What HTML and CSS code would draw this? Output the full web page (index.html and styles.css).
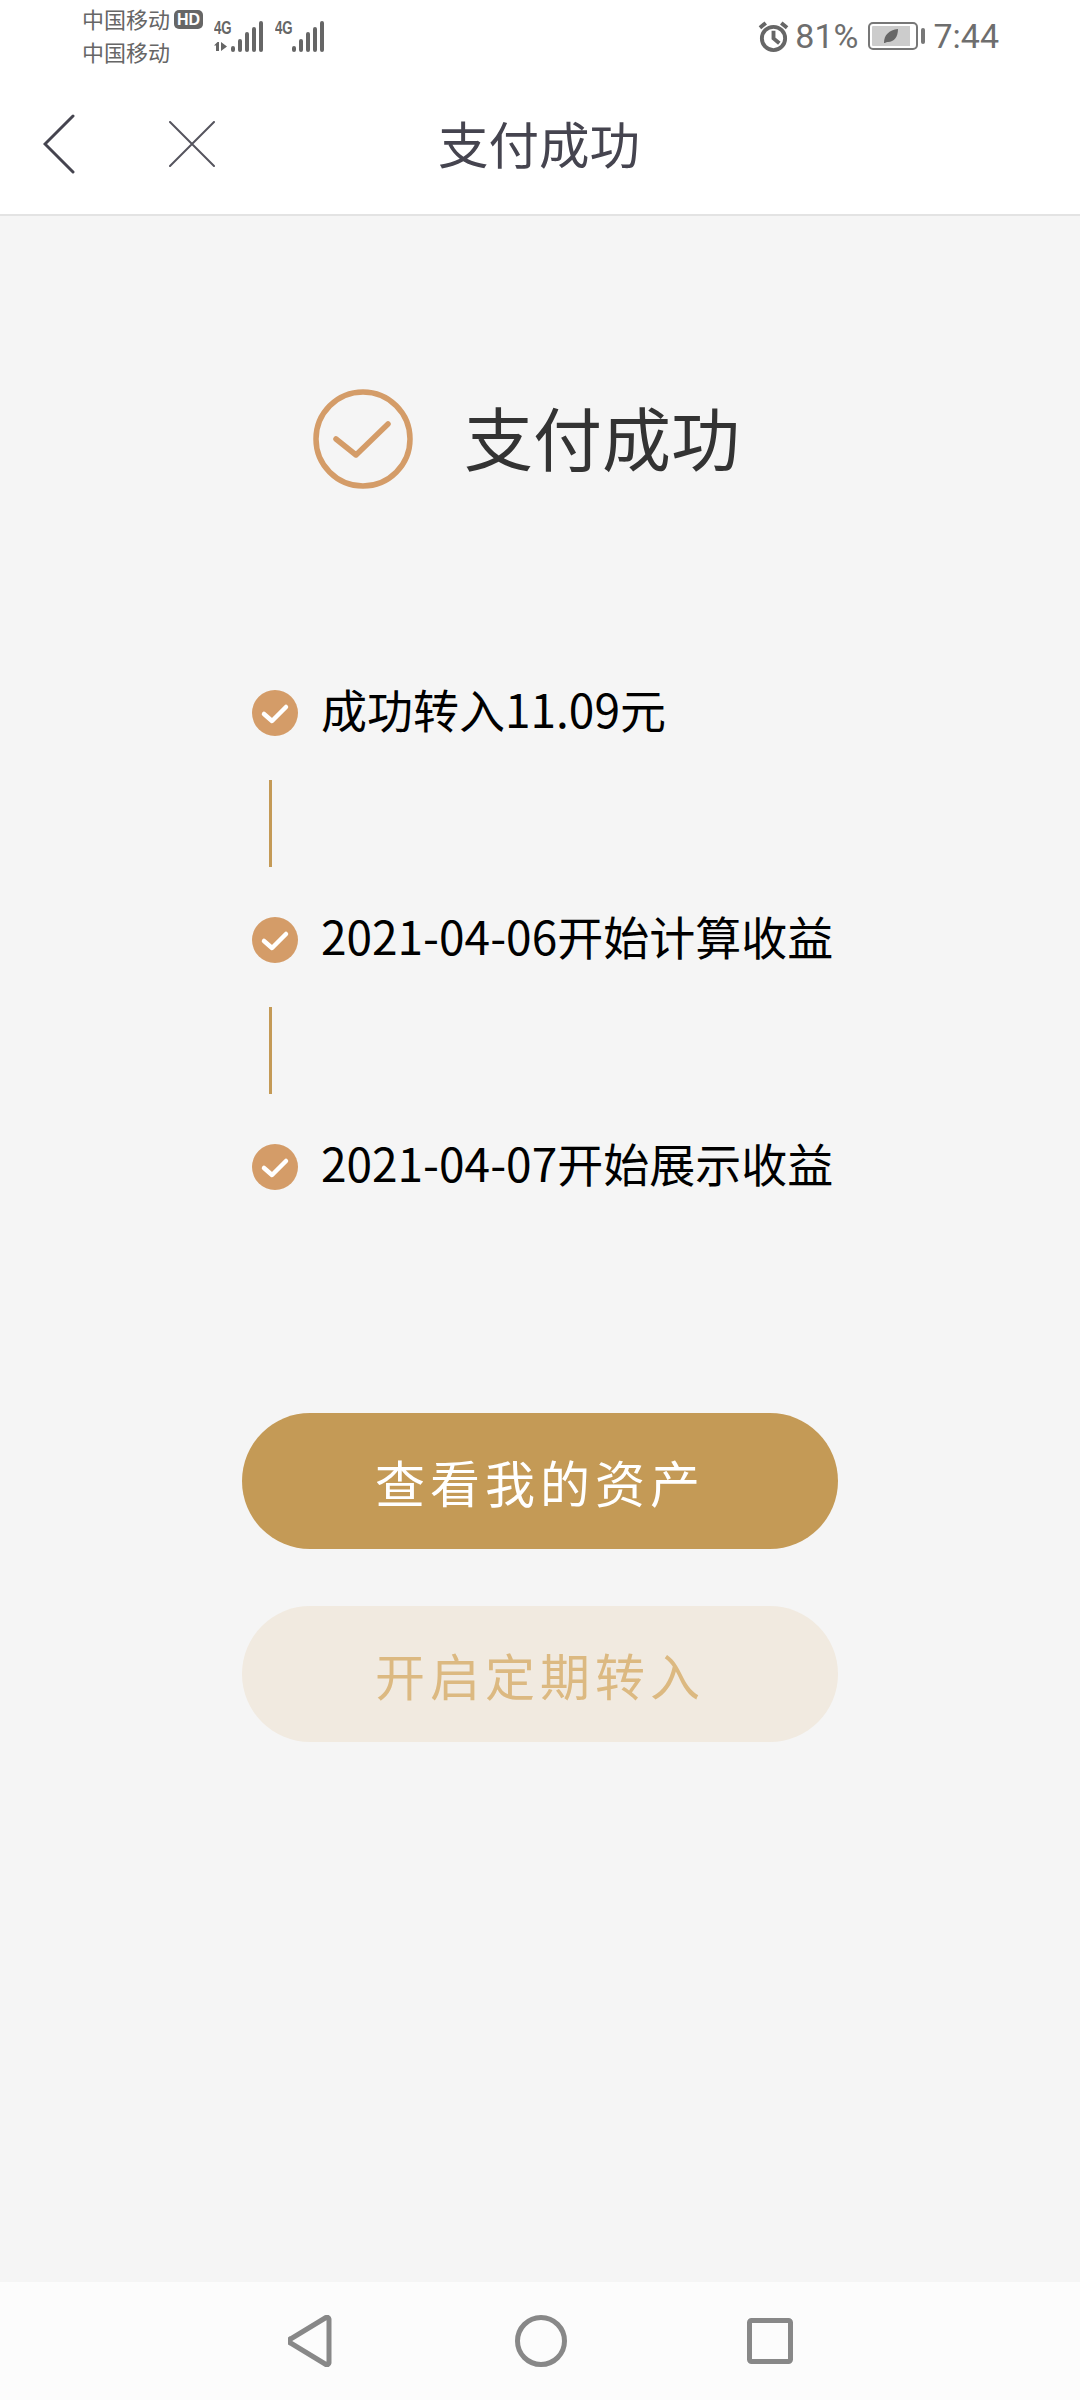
FILE: index.html
```html
<!DOCTYPE html>
<html lang="zh-CN">
<head>
  <meta charset="UTF-8">
  <title>支付成功</title>
  <link rel="stylesheet" href="styles.css">
</head>
<body>
  <div class="app">
    <!-- Status bar -->
    <div class="status-bar">
      <div class="status-left">
        <div class="carriers">
          <div class="carrier">中国移动<span class="hd">HD</span></div>
          <div class="carrier">中国移动</div>
        </div>
        <div class="signal">
          <div class="signal-group">
            <div class="signal-type">
              <span class="signal-label">4G</span>
              <svg class="signal-arrows" width="15" height="9" viewBox="0 0 15 9">
                <path d="M3.500 0L0 3.500h2V9h3V0zM7 0v9l6-4.500z" />
              </svg>
            </div>
            <svg class="signal-bars" width="33" height="31" viewBox="0 0 33 31">
              <path d="M2 27v2M9 20v9M16 13v16M23 8v21M30 2v27" />
            </svg>
          </div>
          <div class="signal-group">
            <div class="signal-type">
              <span class="signal-label">4G</span>
            </div>
            <svg class="signal-bars" width="33" height="31" viewBox="0 0 33 31">
              <path d="M2 27v2M9 20v9M16 13v16M23 8v21M30 2v27" />
            </svg>
          </div>
        </div>
      </div>
      <div class="status-right">
        <svg class="alarm" width="31" height="31" viewBox="0 0 32 32">
          <circle cx="16" cy="18" r="12" />
          <path d="M16 10v8l6 5M2 7l6-5M30 7l-6-5" />
        </svg>
        <span class="battery-level">81%</span>
        <div class="battery">
          <div class="battery-body">
            <svg class="leaf" width="16" height="16" viewBox="0 0 16 16">
              <path d="M1 15C1 7 6 2 15 1c0 8-4 13-10 13-1 0-2 0-3 1z" />
            </svg>
          </div>
          <div class="battery-nub"></div>
        </div>
        <span class="clock">7:44</span>
      </div>
    </div>

    <!-- Header -->
    <div class="header">
      <div class="header-icons">
        <svg class="icon-back" width="32" height="60" viewBox="0 0 32 60">
          <path d="M30 2L2 30l28 28" />
        </svg>
        <svg class="icon-close" width="46" height="46" viewBox="0 0 46 46">
          <path d="M1 1l44 44M45 1L1 45" />
        </svg>
      </div>
      <h1 class="header-title">支付成功</h1>
    </div>

    <!-- Result -->
    <div class="content">
      <div class="result">
        <svg class="result-icon" width="100" height="100" viewBox="0 0 100 100">
          <circle cx="50" cy="50" r="47" />
          <path d="M23 50l20 16 32-31" />
        </svg>
        <span class="result-text">支付成功</span>
      </div>

      <ul class="steps">
        <li class="step">
          <svg class="step-icon" width="46" height="46" viewBox="0 0 46 46">
            <circle cx="23" cy="23" r="23" />
            <path d="M12 24l8 7 14-14" />
          </svg>
          <span class="step-text">成功转入11.09元</span>
        </li>
        <li class="step-line"></li>
        <li class="step">
          <svg class="step-icon" width="46" height="46" viewBox="0 0 46 46">
            <circle cx="23" cy="23" r="23" />
            <path d="M12 24l8 7 14-14" />
          </svg>
          <span class="step-text">2021-04-06开始计算收益</span>
        </li>
        <li class="step-line"></li>
        <li class="step">
          <svg class="step-icon" width="46" height="46" viewBox="0 0 46 46">
            <circle cx="23" cy="23" r="23" />
            <path d="M12 24l8 7 14-14" />
          </svg>
          <span class="step-text">2021-04-07开始展示收益</span>
        </li>
      </ul>

      <div class="actions">
        <button class="btn btn-primary">查看我的资产</button>
        <button class="btn btn-light">开启定期转入</button>
      </div>
    </div>

    <!-- Navigation bar -->
    <div class="nav-bar">
      <svg class="nav-icon nav-back" width="44" height="52" viewBox="0 0 44 52">
        <path d="M41 4v44a2 2 0 0 1-3 1.500L3.500 28.500a2.500 2.500 0 0 1 0-5L38 2.500A2 2 0 0 1 41 4z" />
      </svg>
      <svg class="nav-icon" width="52" height="52" viewBox="0 0 52 52">
        <circle cx="26" cy="26" r="23.500" />
      </svg>
      <svg class="nav-icon" width="46" height="46" viewBox="0 0 46 46">
        <rect x="2.500" y="2.500" width="41" height="41" rx="2" />
      </svg>
    </div>
  </div>
</body>
</html>
```

FILE: styles.css
```css
* {
  box-sizing: border-box;
}

body {
  margin: 0;
  font-family: "Noto Sans CJK SC", "Noto Sans", sans-serif;
  background-color: #f5f5f5;
}

.app {
  display: flex;
  flex-direction: column;
  height: 2400px;
  overflow: hidden;
}

/* Status bar */
.status-bar {
  display: flex;
  justify-content: space-between;
  height: 70px;
  padding: 0 81px 0 82px;
  background-color: #fff;
  color: #666;
}

.status-left {
  display: flex;
}

.carriers {
  padding-top: 2px;
}

.carrier {
  display: flex;
  align-items: center;
  height: 33px;
  font-size: 22px;
  line-height: 33px;
}

.hd {
  width: 29px;
  height: 19px;
  margin: 2px 0 0 4px;
  border-radius: 5px;
  background-color: #666;
  color: #fff;
  font-family: "Liberation Sans", sans-serif;
  font-size: 16px;
  font-weight: bold;
  line-height: 19px;
  text-align: center;
}

.signal {
  display: flex;
  gap: 11px;
  margin: 20px 0 0 11px;
}

.signal-group {
  display: flex;
}

.signal-type {
  display: flex;
  flex-direction: column;
  width: 17px;
}

.signal-label {
  height: 18px;
  font-family: "Liberation Sans", sans-serif;
  font-size: 17px;
  font-weight: bold;
  line-height: 18px;
  white-space: nowrap;
  transform: scale(0.78, 1.05);
  transform-origin: left;
}

.signal-arrows {
  margin-top: 4px;
  fill: #666;
}

.signal-bars {
  margin-top: 1px;
  fill: none;
  stroke: #666;
  stroke-width: 4;
  stroke-linecap: round;
}

.status-right {
  display: flex;
  align-items: center;
  padding-top: 2px;
  color: #6e6e6e;
  font-family: Roboto, sans-serif;
  font-size: 34px;
}

.alarm {
  margin-right: 6px;
  fill: none;
  stroke: #666;
  stroke-width: 4;
}

.battery {
  display: flex;
  align-items: center;
  margin: 0 8px 0 10px;
}

.battery-body {
  display: flex;
  align-items: center;
  justify-content: center;
  width: 50px;
  height: 28px;
  padding: 2px 6px 2px 2px;
  border: 2px solid #777;
  border-radius: 5px;
  background-color: #ccc;
  background-clip: content-box;
}

.leaf {
  fill: #666;
}

.battery-nub {
  width: 4px;
  height: 16px;
  margin-left: 3px;
  border-radius: 2px;
  background-color: #777;
}

/* Header */
.header {
  display: grid;
  grid-template-columns: 1fr auto 1fr;
  align-items: center;
  height: 146px;
  background-color: #fff;
  border-bottom: 2px solid #e3e3e3;
}

.header-icons {
  display: flex;
  align-items: center;
  padding: 3px 0 0 43px;
  gap: 94px;
}

.icon-back,
.icon-close {
  fill: none;
  stroke-linecap: round;
}

.icon-back {
  stroke: #45444f;
  stroke-width: 3;
}

.icon-close {
  stroke: #55545e;
  stroke-width: 2;
}

.header-title {
  margin: 0 2px 0 0;
  color: #45444f;
  font-size: 50.500px;
  font-weight: 400;
  line-height: 60px;
}

/* Result */
.content {
  flex: 1;
  padding-top: 173px;
}

.result {
  display: flex;
  align-items: center;
  padding-left: 313px;
  gap: 51px;
}

.result-icon {
  fill: none;
  stroke: #d49c68;
  stroke-width: 5.500;
  stroke-linecap: round;
  stroke-linejoin: round;
}

.result-text {
  padding-bottom: 6px;
  color: #333;
  font-size: 69px;
  line-height: 88px;
}

.steps {
  display: flex;
  flex-direction: column;
  margin: 201px 0 0;
  padding: 0 0 0 252px;
  list-style-type: none;
}

.step {
  display: flex;
  align-items: center;
  gap: 23px;
  height: 46px;
  color: #000;
  font-size: 46px;
}

.step-text {
  padding-bottom: 10px;
}

.step-icon circle {
  fill: #d49c68;
}

.step-icon path {
  fill: none;
  stroke: #fff;
  stroke-width: 4.500;
  stroke-linecap: round;
  stroke-linejoin: round;
}

.step-line {
  width: 3px;
  height: 87px;
  margin: 44px 0 50px 17px;
  background-color: #c49a56;
}

.actions {
  display: flex;
  flex-direction: column;
  align-items: center;
  gap: 57px;
  margin-top: 223px;
}

.btn {
  width: 596px;
  height: 136px;
  padding: 0;
  border: none;
  border-radius: 68px;
  font-family: inherit;
  font-size: 50px;
  letter-spacing: 5px;
  cursor: pointer;
}

.btn-primary {
  background-color: #c49a56;
  color: #fff;
}

.btn-light {
  background-color: #f1eae0;
  color: #dcb981;
}

/* Navigation bar */
.nav-bar {
  display: flex;
  align-items: center;
  justify-content: center;
  gap: 180px;
  height: 118px;
  background-color: #fcfcfc;
}

.nav-back {
  margin-right: 3px;
}

.nav-icon {
  fill: none;
  stroke: #888;
  stroke-width: 5;
}
```
